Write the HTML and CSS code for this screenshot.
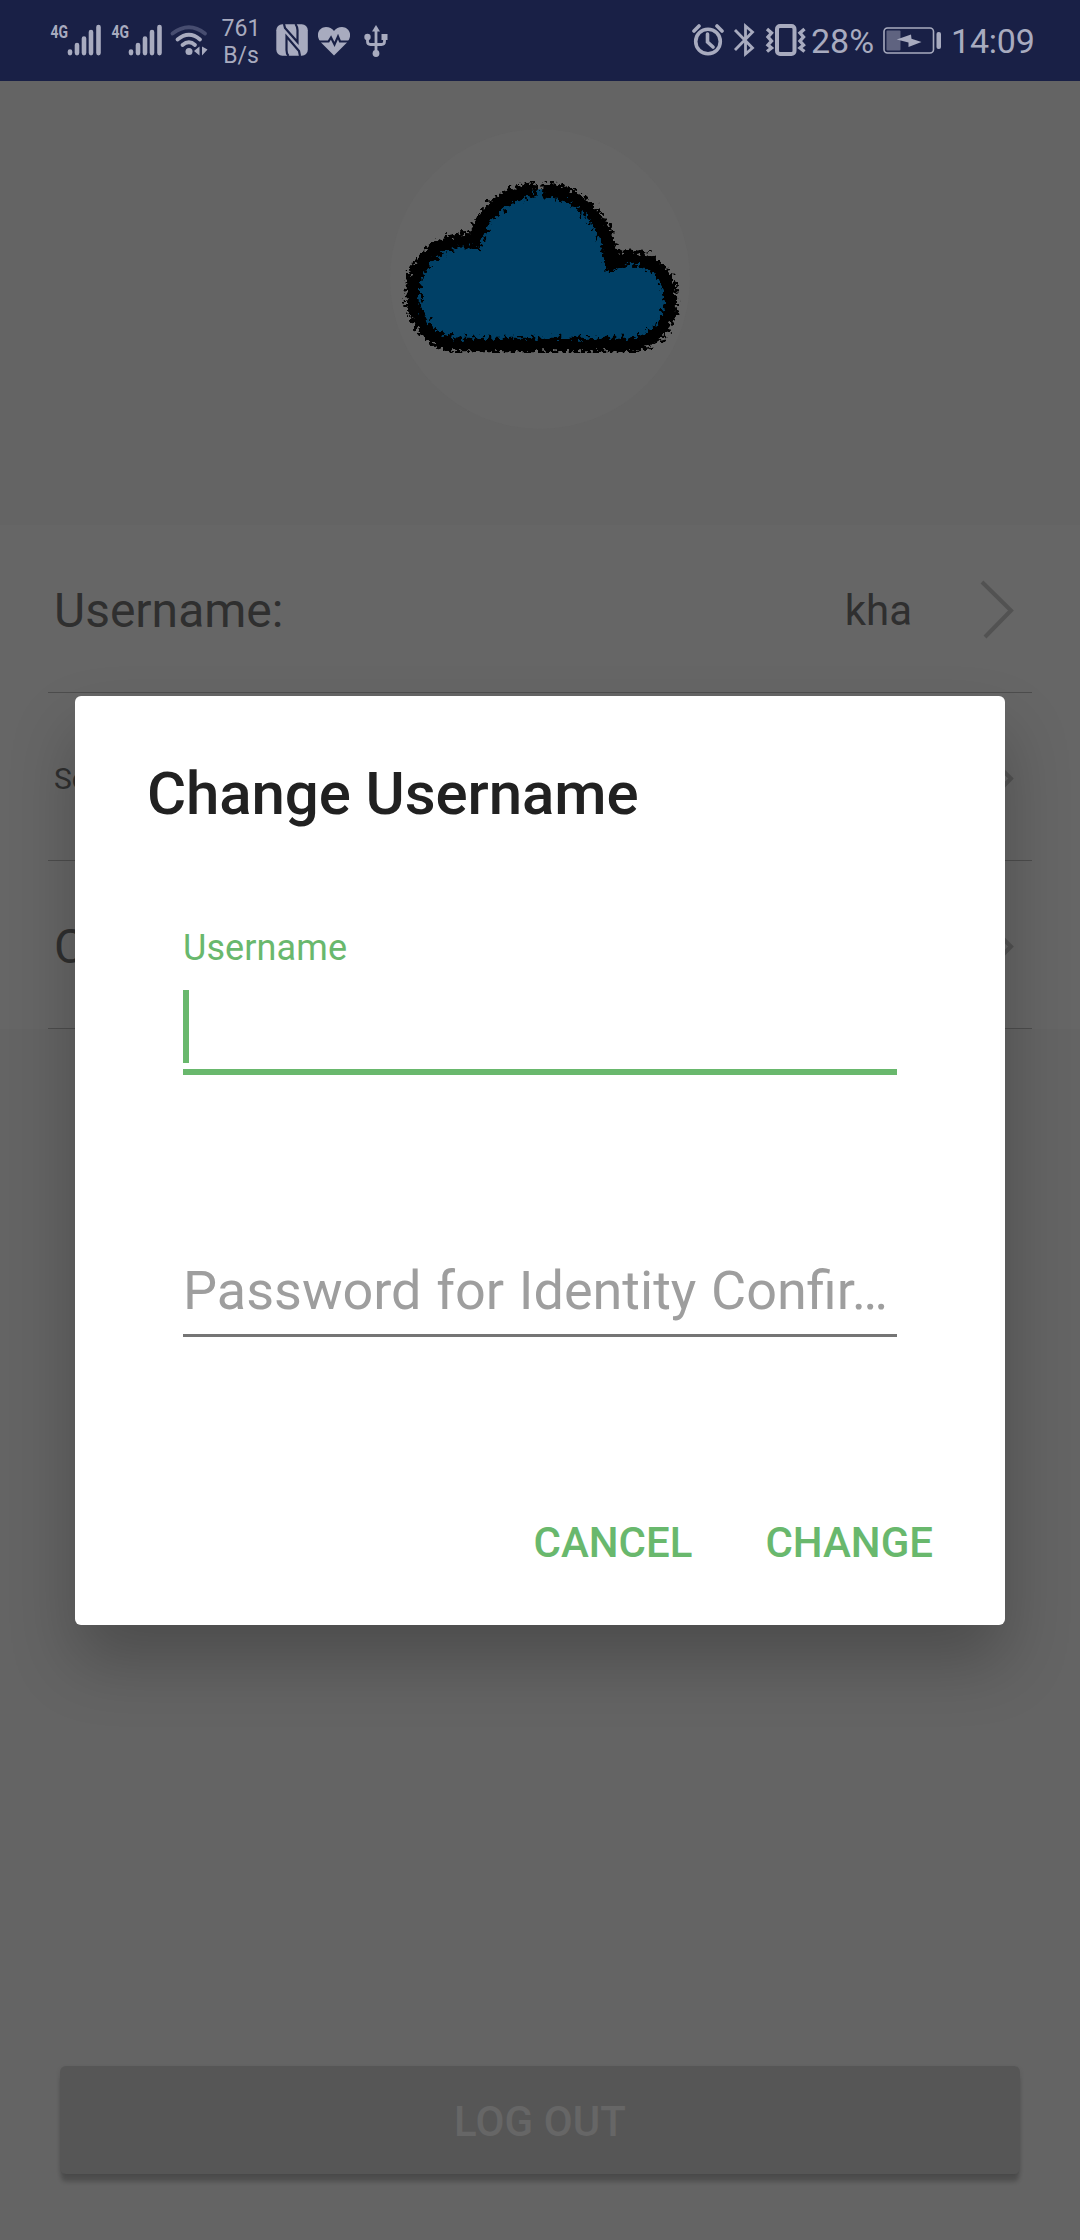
FILE: index.html
```html
<!DOCTYPE html>
<html lang="en">
<head>
<meta charset="utf-8">
<title>Change Username</title>
<link rel="stylesheet" href="styles.css">
</head>
<body>
<div class="screen">
  <header class="status">
    <svg class="signal" viewBox="50 0 52 81" width="52" height="81">
      <text class="net" x="50.5" y="38" textLength="17.5" lengthAdjust="spacingAndGlyphs">4G</text>
      <path class="bar" d="M70 51.5v1.6M77 45v8.1M84 38.5v14.6M91 32v21.1M98.500 27v26.100"/>
    </svg>
    <svg class="signal" viewBox="50 0 52 81" width="52" height="81">
      <text class="net" x="50.5" y="38" textLength="17.5" lengthAdjust="spacingAndGlyphs">4G</text>
      <path class="bar" d="M70 51.5v1.6M77 45v8.1M84 38.5v14.6M91 32v21.1M98.500 27v26.100"/>
    </svg>
    <svg class="wifi" viewBox="169 0 40 81" width="40" height="81">
      <path class="line dim" d="M172.500 33.500Q189 21 205 33.500"/>
      <path class="line" d="M177.500 39.500Q189 30 200 39.500M182.500 45Q189 39.500 195 45"/>
      <circle cx="189" cy="51.500" r="3.500"/>
      <path d="M199.500 46.500v9l-5.500-4.500zM202 46.500v9l5.500-6z"/>
    </svg>
    <div class="speed">761<br>B/s</div>
    <svg class="nfc" viewBox="276 0 32 81" width="32" height="81">
      <rect x="276.300" y="24.300" width="31.500" height="31.500" rx="6"/>
      <path class="cut" d="M284 24l1 4 12.500 14V30q0-3-2-6M288.500 56q-2-2-2-6V36.500L299 51l1 5"/>
    </svg>
    <svg class="heart" viewBox="318 0 32 81" width="32" height="81">
      <path d="M334 55.500l-12.500-12.500C314 35 319.500 27 326 27q5 0 8 4 3-4 8-4c6.500 0 12 8 4.500 16z"/>
      <path class="pulse" d="M317 41.500h11.500l2.500-4 3.500 7 3.500-8 2 5h11"/>
    </svg>
    <svg class="usb" viewBox="364 0 24 81" width="24" height="81">
      <path class="thin" d="M376 30v23M367.500 38v3.500q0 3 3 3h11q3 0 3-3V38"/>
      <path d="M376 25l4 6.500h-8z"/><circle cx="367.500" cy="37" r="3.200"/><rect x="381.500" y="34" width="6" height="6"/><circle cx="376" cy="53.500" r="3.400"/>
    </svg>
    <span class="spacer"></span>
    <svg class="alarm" viewBox="692 0 32 81" width="32" height="81">
      <circle class="stroke" cx="708" cy="41.500" r="12.300"/>
      <path class="stroke" d="M707.500 34v8l5.500 5M694 31l5-5M722 31l-5-5"/>
    </svg>
    <svg class="bluetooth" viewBox="733 0 22 81" width="22" height="81">
      <path class="thin" d="M735 30l17.500 18-7 6v-28l7 6L735 50"/>
    </svg>
    <svg class="vibrate" viewBox="765 0 42 81" width="42" height="81">
      <rect class="case" x="777" y="26" width="17.500" height="28" rx="3"/>
      <path class="thin wave" d="M767 29l4.500 4-3.500 4 3.500 4-3.500 4 3.500 3-4.500 3.500M804.500 29l-4.500 4 3.500 4-3.500 4 3.500 4-3.500 3 4.500 3.500"/>
    </svg>
    <span class="percent">28%</span>
    <svg class="battery" viewBox="883 0 59 81" width="59" height="81">
      <rect class="shell" x="884" y="28" width="49.500" height="25" rx="3.500"/>
      <rect class="charge" x="886.500" y="30.500" width="14" height="20" rx="1"/>
      <path d="M896.700 39.500L911 34.500l.5 4.300 10 3.200L908.500 47v-4.500z"/>
      <rect x="936.500" y="32" width="4.500" height="17" rx="2"/>
    </svg>
    <span class="clock">14:09</span>
  </header>

  <main class="profile">
    <section class="hero">
      <div class="avatar">
        <svg viewBox="60 27 900 900" width="300" height="300">
          <defs>
            <filter id="crayon" x="-5%" y="-5%" width="110%" height="110%">
              <feTurbulence type="fractalNoise" baseFrequency="0.085" numOctaves="2" seed="4"/>
              <feDisplacementMap in="SourceGraphic" scale="46" xChannelSelector="R" yChannelSelector="G"/>
            </filter>
          </defs>
          <path class="cloud" d="M508 208C415 208 335 275 312 365C215 345 128 425 128 520C128 610 190 675 270 675H770C850 675 903 615 903 540C903 450 815 380 722 432C712 300 625 208 508 208Z"/>
          <path class="crayon" filter="url(#crayon)" d="M500 207C415 212 335 275 314 363C215 345 128 425 128 520C128 610 190 675 270 675H770C850 675 903 615 903 540C903 450 815 380 726 430C712 300 625 212 517 207"/>
        </svg>
      </div>
    </section>
    <ul class="list">
      <li class="row"><span class="name">Username:</span><span class="value">kha</span>
        <svg class="chevron" viewBox="0 0 34 62" width="34" height="62"><path d="M2 3L31 31.500 5 58"/></svg></li>
      <li class="row"><span class="name small">Se</span>
        <svg class="chevron" viewBox="0 0 34 62" width="34" height="62"><path d="M2 3L31 31.500 5 58"/></svg></li>
      <li class="row"><span class="name">C</span>
        <svg class="chevron" viewBox="0 0 34 62" width="34" height="62"><path d="M2 3L31 31.500 5 58"/></svg></li>
    </ul>
    <button class="logout">LOG OUT</button>
  </main>

  <div class="dialog" role="dialog">
    <h1 class="title">Change Username</h1>
    <div class="fields">
      <label class="label">Username</label>
      <div class="input focused"><span class="caret"></span></div>
      <div class="input password">Password for Identity Confir…</div>
    </div>
    <div class="actions">
      <button class="action">CANCEL</button>
      <button class="action">CHANGE</button>
    </div>
  </div>
</div>
</body>
</html>
```
FILE: styles.css
```css
* { box-sizing: border-box; }
body { margin: 0; font-family: Roboto, sans-serif; }
button { border: 0; padding: 0; background: none; font: inherit; }
svg { display: block; flex: none; }

.screen {
  position: relative;
  display: flex;
  flex-direction: column;
  width: 1080px;
  height: 2240px;
  overflow: hidden;
  background: #646464;
}

/* Status bar */
.status {
  display: flex;
  align-items: center;
  height: 81px;
  padding: 0 46px 0 50px;
  background: #192046;
  color: #a8abbf;
}
.status svg { fill: #a8abbf; }
.signal + .signal { margin-left: 9px; }
.net { font-size: 18px; font-weight: 700; }
.bar { stroke: #a8abbf; stroke-width: 4.600; stroke-linecap: round; }
.line, .thin, .stroke, .case, .shell { fill: none; stroke: #a8abbf; }
.line { stroke-width: 3.800; stroke-linecap: round; }
.dim { stroke: #474d70; }
.thin { stroke-width: 2.800; }
.wave { stroke-width: 3.400; }
.stroke { stroke-width: 3.600; stroke-linecap: round; }
.case { stroke-width: 4; }
.shell { stroke-width: 1.600; }
.status .charge { fill: #5f6380; }
.cut, .pulse { fill: none; stroke: #192046; stroke-width: 2.200; }
.wifi { margin-left: 6px; }
.speed {
  width: 60px;
  margin-left: 2px;
  padding-top: 2px;
  font-size: 23px;
  line-height: 27px;
  text-align: center;
}
.nfc { margin-left: 5px; }
.heart { margin-left: 10px; }
.usb { margin-left: 14px; }
.spacer { flex: 1; }
.bluetooth { margin-left: 9px; }
.vibrate { margin-left: 10px; }
.percent, .clock { font-size: 34px; line-height: 40px; }
.percent { width: 72px; padding-left: 4px; }
.battery { margin-left: 4px; }
.clock { width: 92px; padding-left: 9px; letter-spacing: -.2px; }

/* Profile page */
.profile { flex: 1; display: flex; flex-direction: column; }
.hero { height: 444px; padding-top: 48px; }
.avatar {
  width: 300px;
  height: 300px;
  margin: 0 auto;
  border-radius: 50%;
  background: #666;
}
.avatar svg { overflow: visible; }
.cloud { fill: #004066; }
.crayon { fill: none; stroke: #000; stroke-width: 43; }

.list { margin: 0; padding: 0; list-style: none; background: #666; }
.row {
  display: flex;
  align-items: center;
  height: 168px;
  margin: 0 48px;
  padding: 3px 18px 0 6px;
  border-bottom: 1px solid #4d4d4d;
  color: #2f2f2f;
}
.name { flex: 1; font-size: 48px; }
.small { font-size: 30px; }
.value { margin-right: 68px; font-size: 42px; }
.chevron { margin-top: -1px; }
.chevron path { fill: none; stroke: #525252; stroke-width: 4; }

.logout {
  height: 108px;
  margin: auto 60px 66px;
  padding-top: 2px;
  border-radius: 6px;
  background: #565656;
  box-shadow: 0 9px 4px -1px rgba(0, 0, 0, .2), 0 2px 5px rgba(0, 0, 0, .1);
  color: #666;
  font-size: 42px;
  font-weight: 500;
  letter-spacing: .1px;
}

/* Dialog */
.dialog {
  position: absolute;
  top: 696px;
  left: 75px;
  width: 930px;
  height: 929px;
  padding: 63px 72px 0;
  border-radius: 6px;
  background: #fff;
  box-shadow: 0 36px 66px rgba(0, 0, 0, .24);
}
.title {
  margin: 0 0 98px;
  color: #212121;
  font-size: 60px;
  font-weight: 500;
  line-height: 70px;
  letter-spacing: -.1px;
}
.fields { padding: 0 36px; }
.label { display: block; color: #69b86d; font-size: 36px; line-height: 42px; letter-spacing: .1px; }
.focused { height: 106px; padding-top: 21px; border-bottom: 6px solid #69b86d; }
.caret { display: block; width: 6px; height: 73px; background: #69b86d; }
.password {
  height: 78px;
  margin-top: 184px;
  border-bottom: 3px solid #757575;
  color: #9e9e9e;
  font-size: 54px;
  line-height: 64px;
  word-spacing: 1.3px;
  white-space: nowrap;
}
.actions { display: flex; justify-content: flex-end; gap: 73px; margin-top: 181px; }
.action { color: #69b86d; font-size: 42px; font-weight: 500; line-height: 50px; }
```
